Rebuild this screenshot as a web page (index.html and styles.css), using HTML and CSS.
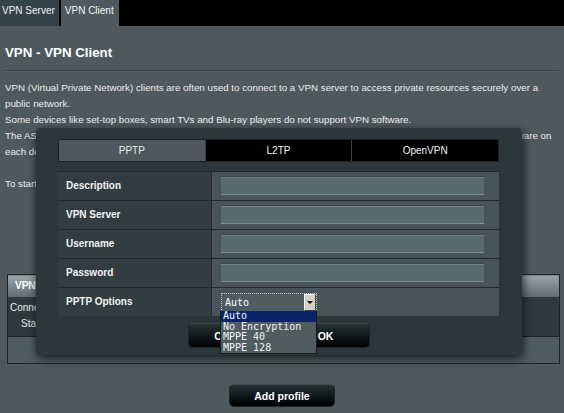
FILE: index.html
```html
<!DOCTYPE html>
<html>
	<head>
		<meta charset="UTF-8">
		<title>VPN Client</title>
		<link rel="stylesheet" href="styles.css">
	</head>
	<body>
		<div class="topbar">
			<span class="top-tab">VPN Server</span>
			<span class="top-tab active">VPN Client</span>
		</div>
		<div class="page">
			<h1 class="title">VPN - VPN Client</h1>
			<div class="divider"></div>
			<p class="intro">VPN (Virtual Private Network) clients are often used to connect to a VPN server to access private resources securely over a<br>public network.<br>Some devices like set-top boxes, smart TVs and Blu-ray players do not support VPN software.<br>The ASUSWRT VPN feature provides access to all the devices in your home network without having to install VPN software on<br>each device.</p>
			<p class="intro">To start a VPN connection, please follow the steps below:</p>
			<ol class="steps">
				<li>Click <b>Add profile</b>.</li>
				<li>Select a VPN connection type (PPTP, L2TP or OpenVPN).</li>
				<li>Key in the authentication information provided by your VPN provider.</li>
			</ol>
			<table class="list-table">
				<tr><th class="list-head" colspan="6">VPN Server List</th></tr>
				<tr class="col-heads">
					<td class="col-status">Connection Status</td>
					<td>Description</td>
					<td>VPN type</td>
					<td>Edit</td>
					<td>Delete</td>
					<td>Connection</td>
				</tr>
				<tr class="empty-row"><td colspan="6">No data in table.</td></tr>
			</table>
			<div class="page-actions">
				<button class="btn btn-wide">Add profile</button>
			</div>
		</div>

		<!-- add profile popup -->
		<div class="modal">
			<div class="proto-tabs">
				<div class="proto active">PPTP</div>
				<div class="proto">L2TP</div>
				<div class="proto">OpenVPN</div>
			</div>
			<div class="form">
				<div class="form-row">
					<div class="form-label">Description</div>
					<div class="form-field"><input class="text-input" type="text"></div>
				</div>
				<div class="form-row">
					<div class="form-label">VPN Server</div>
					<div class="form-field"><input class="text-input" type="text"></div>
				</div>
				<div class="form-row">
					<div class="form-label">Username</div>
					<div class="form-field"><input class="text-input" type="text"></div>
				</div>
				<div class="form-row">
					<div class="form-label">Password</div>
					<div class="form-field"><input class="text-input" type="password"></div>
				</div>
				<div class="form-row">
					<div class="form-label">PPTP Options</div>
					<div class="form-field">
						<div class="select">
							<span class="select-value">Auto</span>
							<span class="select-arrow"></span>
							<ul class="select-menu">
								<li class="selected">Auto</li>
								<li>No Encryption</li>
								<li>MPPE 40</li>
								<li>MPPE 128</li>
							</ul>
						</div>
					</div>
				</div>
			</div>
			<div class="modal-actions">
				<button class="btn">Cancel</button>
				<button class="btn">OK</button>
			</div>
		</div>
	</body>
</html>
```

FILE: styles.css
```css
html,body{
	margin: 0;
	width: 100%;
	height: 100%;
}
body{
	background-color: #4d595d;
	color: #ececec;
	font: 10px/16px "Liberation Sans", Arial, sans-serif;
	overflow: hidden;
}
ul,li{
	margin: 0;
	padding: 0;
	list-style: none;
}
p{
	margin: 0;
}

/* top tabs */
.topbar{
	height: 26px;
	background-color: #000;
	display: flex;
	gap: 2px;
}
.top-tab{
	box-sizing: border-box;
	height: 26px;
	padding: 3px 4px 0 2px;
	line-height: 16px;
	background-color: #34424a;
	color: #f2f2f2;
}
.top-tab.active{
	background-color: #4d595d;
	padding: 3px 5px 0 4px;
}

/* page */
.page{
	padding: 0 5px;
}
.title{
	margin: 19px 0 0;
	font-size: 13.3px;
	line-height: 16px;
	font-weight: bold;
	color: #fff;
}
.divider{
	margin-top: 9px;
	height: 1px;
	background-color: #3b474b;
	border-bottom: 1px solid #566367;
}
.intro{
	margin-top: 8px;
	font-size: 9.75px;
	white-space: nowrap;
}
.intro + .intro{
	margin-top: 16px;
}
.steps{
	margin: 10px 0 0;
	padding-left: 31px;
	font-size: 9.75px;
	white-space: nowrap;
}

.list-table{
	margin: 24px 0 0 2px;
	width: 553px;
	border-collapse: collapse;
	border: 1px solid #222;
}
.list-head{
	height: 22px;
	padding: 0 0 0 7px;
	text-align: left;
	font-weight: bold;
	color: #fff;
	background: linear-gradient(#98a5a9, #5d6c71);
}
.col-heads td{
	height: 39px;
	box-sizing: border-box;
	padding: 3px 2px 4px;
	background-color: #2f3a3e;
	text-align: center;
	vertical-align: top;
}
.col-status{
	width: 54px;
}
.empty-row td{
	height: 24px;
	background-color: #4f5d62;
	border-top: 1px solid #222;
	text-align: center;
	color: #ffcc00;
}
.page-actions{
	display: flex;
	justify-content: center;
	margin-top: 20px;
}

/* buttons */
.btn{
	width: 88px;
	height: 25px;
	border-radius: 5px;
	border: 1px solid #1b2427;
	border-top-color: #3b494e;
	background: linear-gradient(#263337, #0c1315 60%, #000);
	color: #fff;
	font: bold 10.5px "Liberation Sans", Arial, sans-serif;
	padding: 0;
}
.btn-wide{
	width: 106px;
	height: 23px;
}

/* popup */
.modal{
	position: absolute;
	left: 36px;
	top: 128px;
	width: 486px;
	height: 227px;
	box-sizing: border-box;
	padding: 11px 23px 7px 22px;
	background-color: #2b373b;
	border-radius: 5px;
	box-shadow: 1px 3px 10px rgba(0,0,0,0.75);
}
.proto-tabs{
	display: flex;
	height: 23px;
	border: 1px solid #222;
	box-sizing: border-box;
}
.proto{
	flex: 1;
	background-color: #000;
	color: #f2f2f2;
	text-align: center;
	line-height: 21px;
	border-left: 1px solid #3a4549;
}
.proto:first-child{
	border-left: 0;
}
.proto.active{
	background-color: #4d595d;
	color: #e8e8e8;
}
.form{
	margin-top: 9px;
	border-top: 1px solid #20292c;
}
.form-row{
	display: flex;
	height: 29px;
	box-sizing: border-box;
	border-bottom: 1px solid #20292c;
}
.form-row:last-child{
	border-bottom: 0;
	height: 28px;
}
.form-label{
	width: 154px;
	box-sizing: border-box;
	padding-left: 8px;
	background-color: #313d41;
	border-right: 1px solid #20292c;
	font-weight: bold;
	color: #f2f2f2;
	display: flex;
	align-items: center;
}
.form-field{
	flex: 1;
	background-color: #475459;
	padding: 4px 0 0 9px;
}
.text-input{
	display: block;
	box-sizing: border-box;
	width: 263px;
	height: 19px;
	margin: 0;
	padding: 0;
	background-color: #576a70;
	border: 0;
	border-top: 1px solid #394549;
	border-bottom: 1px solid #7e8f94;
	box-shadow: inset 0 1px 0 #728388;
}

/* select with its open list */
.select{
	position: relative;
	box-sizing: border-box;
	width: 96px;
	height: 19px;
	margin-top: 1px;
	border: 1px dotted #c8c8c8;
	background-color: #4f5c61;
	font: 10px/17px "DejaVu Sans Mono", monospace;
	color: #fff;
}
.select-value{
	padding-left: 3px;
}
.select-arrow{
	position: absolute;
	right: 0;
	top: 0;
	width: 12px;
	height: 17px;
	box-sizing: border-box;
	background-color: #d4d0c8;
	border: 1px solid;
	border-color: #fff #404040 #404040 #fff;
}
.select-arrow:after{
	content: "";
	position: absolute;
	left: 2px;
	top: 6px;
	border-left: 3px solid transparent;
	border-right: 3px solid transparent;
	border-top: 3px solid #000;
}
.select-menu{
	position: absolute;
	left: -2px;
	top: 17px;
	width: 97px;
	box-sizing: border-box;
	background-color: #4f5c61;
	border: 1px solid #1a1a1a;
	border-top: 0;
}
.select-menu li{
	line-height: 10.5px;
	padding-left: 2px;
	white-space: nowrap;
	color: #f4f4f4;
}
.select-menu li.selected{
	background-color: #0a246a;
	color: #fff;
}
.modal-actions{
	display: flex;
	justify-content: center;
	gap: 6px;
	margin-top: 7px;
}
```
